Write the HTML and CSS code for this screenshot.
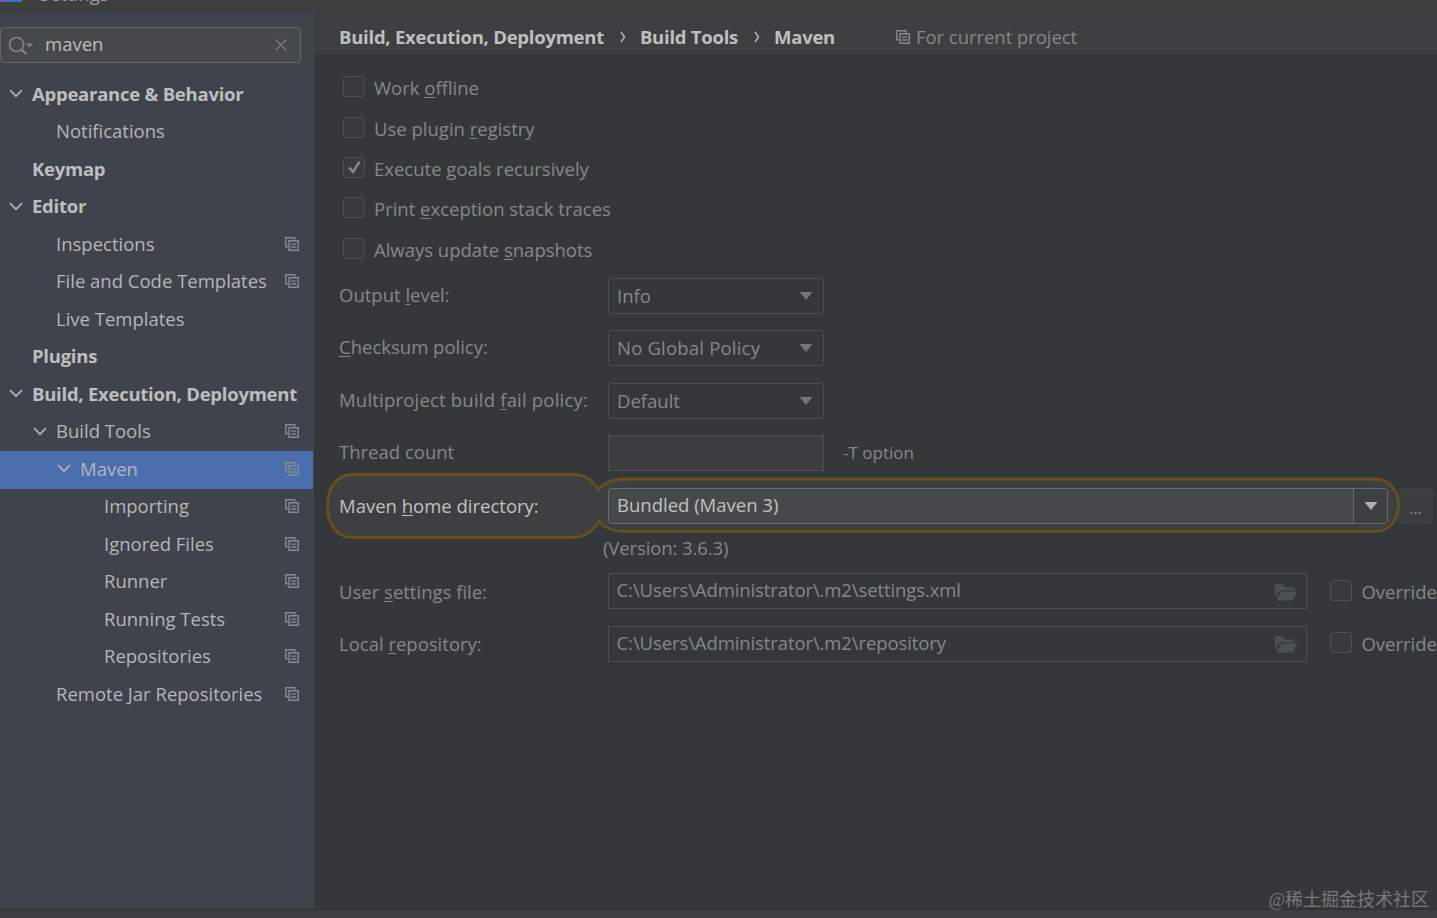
FILE: index.html
```html
<!DOCTYPE html>
<html lang="en">
<head>
    <meta charset="UTF-8">
    <meta name="viewport" content="width=device-width, initial-scale=1.0">
    <title>Settings</title>
    <link rel="stylesheet" href="styles.css">
</head>
<body>
    <!-- shared icons -->
    <svg class="defs" width="0" height="0">
        <symbol id="copy" viewBox="0 0 14 14">
            <path d="M3.5 9.8H.8V.8h9v2" fill="none" stroke="currentColor" stroke-width="1.4"/>
            <path d="M4 3.8h9.2v9.4H4z" fill="none" stroke="currentColor" stroke-width="1.4"/>
            <path d="M6 7.2h5.2M6 10h5.2" stroke="currentColor" stroke-width="1.3"/>
        </symbol>
        <symbol id="chevron" viewBox="0 0 14 9">
            <path d="M1 1.2l6 6 6-6" fill="none" stroke="currentColor" stroke-width="1.7"/>
        </symbol>
        <symbol id="arrow" viewBox="0 0 14 8">
            <path d="M.5 0h13L7 8z" fill="currentColor"/>
        </symbol>
        <symbol id="folder" viewBox="0 0 24 18">
            <path d="M1 14V1.2h7.2l2.4 3.2h9.6v2.8H6.4z" fill="currentColor"/>
            <path d="M7.2 8.4H23.4L19 17.5H2z" fill="currentColor"/>
        </symbol>
    </svg>

    <div class="window">
        <div class="titlebar"><span class="logo"></span><span class="title">Settings</span></div>

        <div class="body">
            <div class="sidebar">
                <div class="search">
                    <svg class="search-icon" width="26" height="20" viewBox="0 0 26 20">
                        <circle cx="8.6" cy="8.5" r="7" fill="none" stroke="currentColor" stroke-width="1.7"/>
                        <path d="M13.4 13.4l4.8 4.8" stroke="currentColor" stroke-width="2.2"/>
                        <path d="M18 7.5h7l-3.5 4z" fill="currentColor"/>
                    </svg>
                    <span class="search-text">maven</span>
                    <svg class="clear" width="12" height="12" viewBox="0 0 12 12">
                        <path d="M.8.8l10.4 10.4M11.2.8L.8 11.2" stroke="currentColor" stroke-width="1.3"/>
                    </svg>
                </div>

                <div class="tree">
                    <div class="node group l0"><svg class="chev"><use href="#chevron"/></svg><span>Appearance &amp; Behavior</span></div>
                    <div class="node l1"><span>Notifications</span></div>
                    <div class="node group l0"><span>Keymap</span></div>
                    <div class="node group l0"><svg class="chev"><use href="#chevron"/></svg><span>Editor</span></div>
                    <div class="node l1"><span>Inspections</span><svg class="copy"><use href="#copy"/></svg></div>
                    <div class="node l1"><span>File and Code Templates</span><svg class="copy"><use href="#copy"/></svg></div>
                    <div class="node l1"><span>Live Templates</span></div>
                    <div class="node group l0"><span>Plugins</span></div>
                    <div class="node group l0"><svg class="chev"><use href="#chevron"/></svg><span>Build, Execution, Deployment</span></div>
                    <div class="node l1"><svg class="chev"><use href="#chevron"/></svg><span>Build Tools</span><svg class="copy"><use href="#copy"/></svg></div>
                    <div class="node l2 selected"><svg class="chev"><use href="#chevron"/></svg><span>Maven</span><svg class="copy"><use href="#copy"/></svg></div>
                    <div class="node l3"><span>Importing</span><svg class="copy"><use href="#copy"/></svg></div>
                    <div class="node l3"><span>Ignored Files</span><svg class="copy"><use href="#copy"/></svg></div>
                    <div class="node l3"><span>Runner</span><svg class="copy"><use href="#copy"/></svg></div>
                    <div class="node l3"><span>Running Tests</span><svg class="copy"><use href="#copy"/></svg></div>
                    <div class="node l3"><span>Repositories</span><svg class="copy"><use href="#copy"/></svg></div>
                    <div class="node l1"><span>Remote Jar Repositories</span><svg class="copy"><use href="#copy"/></svg></div>
                </div>
            </div>

            <div class="main">
                <div class="breadcrumb">
                    <span>Build, Execution, Deployment</span>
                    <svg class="sep" width="6" height="12" viewBox="0 0 6 12"><path d="M1 1l3.5 5L1 11" fill="none" stroke="currentColor" stroke-width="1.5"/></svg>
                    <span>Build Tools</span>
                    <svg class="sep" width="6" height="12" viewBox="0 0 6 12"><path d="M1 1l3.5 5L1 11" fill="none" stroke="currentColor" stroke-width="1.5"/></svg>
                    <span>Maven</span>
                    <span class="scope"><svg class="copy"><use href="#copy"/></svg>For current project</span>
                </div>

                <div class="page">
                    <div class="checks">
                        <div class="check"><span class="box"></span><span>Work <u>o</u>ffline</span></div>
                        <div class="check"><span class="box"></span><span>Use plugin <u>r</u>egistry</span></div>
                        <div class="check"><span class="box"><svg width="15" height="15" viewBox="0 0 15 15"><path d="M2 7.5l4 4.5L12.5 1.5" fill="none" stroke="currentColor" stroke-width="2.4"/></svg></span><span>Execute <u>g</u>oals recursively</span></div>
                        <div class="check"><span class="box"></span><span>Print <u>e</u>xception stack traces</span></div>
                        <div class="check"><span class="box"></span><span>Always update <u>s</u>napshots</span></div>
                    </div>

                    <div class="row">
                        <label>Output <u>l</u>evel:</label>
                        <div class="select">Info<svg class="arrow"><use href="#arrow"/></svg></div>
                    </div>
                    <div class="row">
                        <label><u>C</u>hecksum policy:</label>
                        <div class="select wide">No Global Policy<svg class="arrow"><use href="#arrow"/></svg></div>
                    </div>
                    <div class="row">
                        <label class="wide">Multiproject build <u>f</u>ail policy:</label>
                        <div class="select">Default<svg class="arrow"><use href="#arrow"/></svg></div>
                    </div>
                    <div class="row">
                        <label>Thread count</label>
                        <div class="input short"></div>
                        <span class="hint">-T option</span>
                    </div>
                    <div class="row home">
                        <svg class="spotlight" width="1076" height="68" viewBox="0 0 1076 68">
                            <path d="M28 2.5H248C261 2.5 268 9 274 17.5C280 10 289 7 300 7H1050C1064 7 1073.5 18.5 1073.5 33.5C1073.5 48.5 1064 59.5 1050 59.5H300C289 59.5 280 57 274 49.5C268 58 261 65.5 248 65.5H28C13 65.5 2.5 54 2.5 34C2.5 14 13 2.5 28 2.5Z" fill="#3e3f40" stroke="#655020" stroke-width="2.8"/>
                        </svg>
                        <label>Maven <u>h</u>ome directory:</label>
                        <div class="combo"><span class="value">Bundled (Maven 3)</span><span class="drop"><svg class="arrow"><use href="#arrow"/></svg></span></div>
                        <div class="more">...</div>
                    </div>
                    <div class="version">(Version: 3.6.3)</div>
                    <div class="row path">
                        <label>User <u>s</u>ettings file:</label>
                        <div class="input long">C:\Users\Administrator\.m2\settings.xml<svg class="folder"><use href="#folder"/></svg></div>
                        <div class="check override"><span class="box"></span><span>Override</span></div>
                    </div>
                    <div class="row path">
                        <label>Local <u>r</u>epository:</label>
                        <div class="input long">C:\Users\Administrator\.m2\repository<svg class="folder"><use href="#folder"/></svg></div>
                        <div class="check override"><span class="box"></span><span>Override</span></div>
                    </div>
                </div>
            </div>
        </div>

        <div class="footer"></div>
        <div class="watermark">@稀土掘金技术社区</div>
    </div>
</body>
</html>
```

FILE: styles.css
```css
* {
    box-sizing: border-box;
}

body {
    margin: 0;
    overflow: hidden;
    font-family: "Open Sans", "Noto Sans", sans-serif;
    font-size: 18.5px;
    line-height: 24px;
    color: #b4b6b8;
    background: #3d3f40;
}

svg {
    display: block;
    flex: none;
}

.defs {
    position: absolute;
}

.window {
    position: relative;
    display: flex;
    flex-direction: column;
    width: 1437px;
    height: 918px;
    overflow: hidden;
    white-space: nowrap;
}

.titlebar {
    display: flex;
    align-items: flex-end;
    height: 12px;
    background: #3e4040;
    overflow: hidden;
}

.logo {
    width: 22px;
    height: 2px;
    margin-bottom: 10px;
    background: linear-gradient(90deg, #8a4fb5, #3573c8 30%);
}

.title {
    margin: 0 0 6px 18px;
    font-size: 18.5px;
    color: #999b9c;
}

.body {
    display: flex;
    flex: 1;
}

/* sidebar */

.sidebar {
    width: 314px;
    padding-top: 15px;
    background: #3f434b;
}

.search {
    display: flex;
    align-items: center;
    width: 301px;
    height: 36px;
    padding: 0 13px 0 7px;
    background: #454949;
    border: 1.5px solid #646868;
    border-radius: 4px;
}

.search-icon {
    margin-top: 1px;
    color: #7d8284;
}

.search-text {
    flex: 1;
    margin: -2px 0 0 11px;
    color: #bcbebe;
}

.clear {
    color: #777b7c;
}

.tree {
    padding-top: 13px;
}

.node {
    display: flex;
    align-items: center;
    height: 37.5px;
    padding-right: 15.5px;
    padding-bottom: 2px;
}

.node .copy {
    margin-left: auto;
}

.group {
    font-weight: 700;
    letter-spacing: -0.25px;
    color: #bcbec0;
}

.l0 {
    padding-left: 32px;
}

.l1 {
    padding-left: 56px;
}

.l2 {
    padding-left: 80px;
}

.l3 {
    padding-left: 104px;
}

.chev {
    width: 14px;
    height: 9px;
    margin: 0 9.5px 0 -23.5px;
    color: #adb1b4;
}

.copy {
    width: 14px;
    height: 14px;
    color: #858b90;
}

.selected {
    width: 313px;
    padding-right: 14.5px;
    background: #4b6eaf;
}

/* right side */

.main {
    display: flex;
    flex: 1;
    flex-direction: column;
    min-width: 0;
}

.breadcrumb {
    display: flex;
    align-items: center;
    height: 42px;
    padding: 8px 0 0 25px;
    font-weight: 700;
    letter-spacing: -0.25px;
    color: #bdbfc0;
    background: #3d3f40;
}

.sep {
    margin: 0 14px 0 16px;
    color: #b0b2b3;
}

.scope {
    display: flex;
    align-items: center;
    gap: 6px;
    margin-left: 61px;
    font-weight: 400;
    letter-spacing: -0.05px;
    color: #858788;
}

.scope .copy {
    margin-top: -1px;
}

.page {
    flex: 1;
    padding: 14px 0 0 25px;
    color: #858889;
    background: #34383a;
}

u {
    text-decoration-thickness: 1px;
    text-underline-offset: 2px;
}

.check {
    display: flex;
    align-items: center;
    gap: 9px;
    height: 40.4px;
}

.checks {
    height: 210px;
    padding-left: 4px;
}

.box {
    display: flex;
    align-items: center;
    justify-content: center;
    width: 22px;
    height: 21px;
    margin-top: -3px;
    background: #373b3b;
    border: 1.5px solid #4d5151;
    border-radius: 3px;
}

.row {
    position: relative;
    display: flex;
    align-items: center;
    height: 52.4px;
    padding-bottom: 16.4px;
}

.row label {
    width: 269px;
    margin-top: -2px;
}

.row .wide {
    letter-spacing: 0.2px;
}

.select,
.input {
    display: flex;
    align-items: center;
    justify-content: space-between;
    width: 216px;
    height: 36px;
    padding: 0 10px 0 8px;
    border: 1.5px solid #4c5051;
    border-radius: 3px;
}

.input {
    border-radius: 0;
}

.short {
    background: #3c3d3e;
}

.arrow {
    width: 14px;
    height: 8px;
}

.select .arrow {
    color: #727677;
}

.hint {
    margin-left: 19px;
    font-size: 17px;
}

.home {
    color: #c0c2c2;
}

.home label,
.home .combo {
    position: relative;
}

.home label {
    margin-top: 0;
}

/* outline behind the highlighted option */
.spotlight {
    position: absolute;
    left: -14px;
    top: -16px;
}

.combo {
    display: flex;
    align-items: center;
    width: 780px;
    height: 36px;
    background: #454949;
    border: 1.5px solid #656a6a;
    border-radius: 3px;
}

.value {
    flex: 1;
    margin-top: -2px;
    padding-left: 8px;
}

.drop {
    display: flex;
    align-items: center;
    justify-content: center;
    width: 34px;
    height: 100%;
    background: #3d4041;
    border-left: 1.5px solid #656a6a;
    color: #adb0b0;
}

.more {
    width: 35px;
    height: 36px;
    margin-left: 10px;
    font-size: 16px;
    line-height: 38px;
    text-align: center;
    color: #8d9090;
    background: #3a3e3f;
    border: 1px solid #3e4242;
    border-radius: 4px;
}

.version {
    height: 33.4px;
    padding-left: 264px;
    line-height: 16px;
    letter-spacing: -0.1px;
}

.path label {
    margin-top: 1px;
}

.long {
    width: 701px;
    padding-bottom: 2px;
    letter-spacing: -0.1px;
}

.folder {
    width: 24px;
    height: 18px;
    margin: 3px -2px 0 0;
    color: #4b5153;
}

.override {
    margin: 1px 0 0 23px;
}

.footer {
    height: 9px;
    background: #3d3f40;
    border-top: 1px solid #2e3031;
}

.watermark {
    position: absolute;
    right: 8px;
    bottom: 6px;
    font-family: "Liberation Serif", "Noto Sans CJK SC", serif;
    font-size: 18px;
    color: #77797a;
}
```
